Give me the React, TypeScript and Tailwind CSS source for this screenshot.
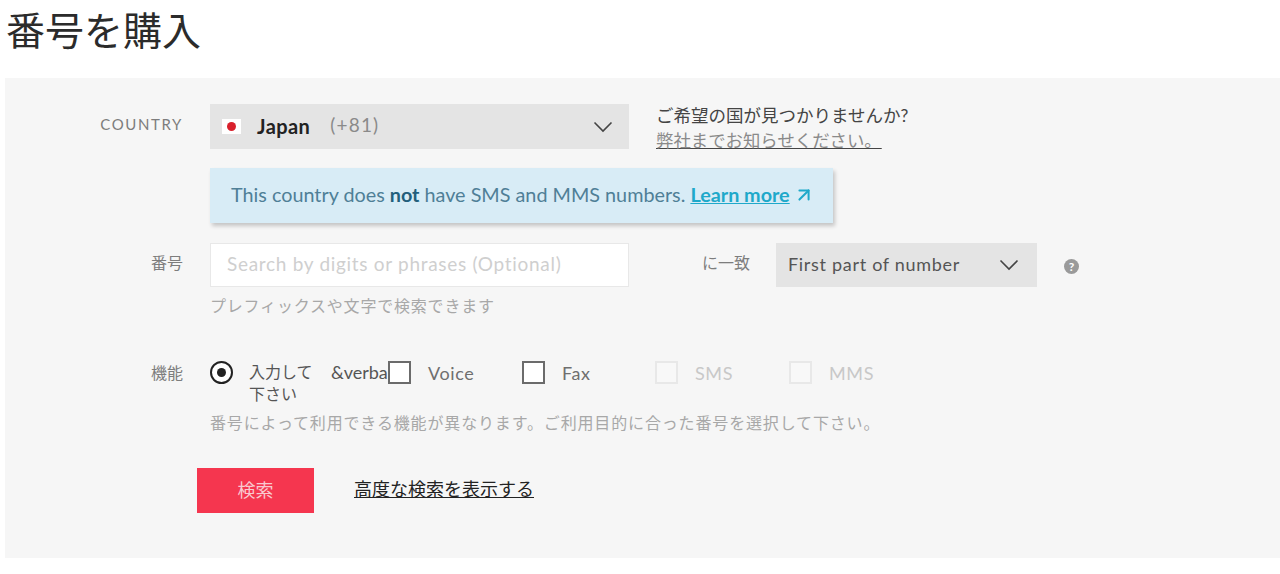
import React from "react";
import { ArrowUpRight } from "lucide-react";

const font = "font-['Lato','Noto_Sans_CJK_JP',sans-serif]";

function Chevron({ className }: { className: string }) {
  return (
    <svg className={className} width="20" height="12" viewBox="0 0 20 12" fill="none" stroke="#444" strokeWidth="1.6">
      <path d="M1.5 1.5L10 10L18.5 1.5" />
    </svg>
  );
}

function Check({ label, disabled, className }: { label: string; disabled?: boolean; className: string }) {
  return (
    <div className={`flex items-center ${className}`}>
      <span
        className={`w-[23px] h-[23px] shrink-0 border-2 ${
          disabled ? "border-[#e8e8e8] bg-[#f8f8f8]" : "border-[#6b6b6b] bg-white"
        }`}
      />
      <span className={`ml-[17px] mt-[2px] text-[18px] tracking-[0.6px] ${disabled ? "text-[#c8c8c8]" : "text-[#6f6f6f]"}`}>
        {label}
      </span>
    </div>
  );
}

export default function App() {
  return (
    <div className={`${font} w-[1280px] h-[574px] bg-white overflow-hidden`}>
      {/* Title */}
      <h1 className="h-[78px] pl-[6px] pt-[6px] text-[39px] leading-[48px] font-normal text-[#2b2b2b]">番号を購入</h1>

      {/* Panel */}
      <div className="ml-[5px] h-[480px] bg-[#f6f6f6] pt-[26px]">
        {/* Country */}
        <div className="flex h-[45px]">
          <div className="w-[178px] h-[41px] flex items-center justify-end text-[15px] tracking-[1.6px] text-[#7d7d7d]">
            COUNTRY
          </div>
          <div className="ml-[27px] w-[419px] h-[45px] bg-[#e4e4e4] flex items-center pl-[12px] pr-[16px]">
            <span className="w-[19px] h-[15px] bg-white flex items-center justify-center">
              <span className="w-[9px] h-[9px] rounded-full bg-[#d9202c]" />
            </span>
            <span className="ml-[16px] -mt-[2px] text-[20px] tracking-[0.4px] font-bold text-[#222]">Japan</span>
            <span className="ml-[20px] -mt-[2px] text-[19px] tracking-[1.2px] text-[#8a8a8a]">(+81)</span>
            <Chevron className="ml-auto" />
          </div>
          <div className="ml-[27px] -mt-[1px]">
            <p className="text-[17.5px] leading-[25px] whitespace-nowrap text-[#444]">ご希望の国が見つかりませんか?</p>
            <a className="block text-[17.4px] leading-[25px] whitespace-nowrap text-[#8a8a8a] underline decoration-[#444]">
              弊社までお知らせください。
            </a>
          </div>
        </div>

        {/* Alert */}
        <div className="mt-[19px] ml-[205px] w-[623px] h-[55px] bg-[#d8ecf6] shadow-[2px_3px_4px_rgba(0,0,0,0.2)] flex items-center pl-[21px] pb-[2px] text-[19.8px] text-[#4f7f97]">
          <span>
            This country does <b className="text-[#235f7c]">not</b> have SMS and MMS numbers.{" "}
            <a className="font-bold text-[#1fa9ca] underline">Learn more</a>
          </span>
          <ArrowUpRight className="ml-[3px] text-[#1fa9ca]" size={22} strokeWidth={2.2} />
        </div>

        {/* Number */}
        <div className="flex mt-[20px]">
          <div className="w-[178px] h-[40px] flex items-center justify-end text-[16px] text-[#7d7d7d]">番号</div>
          <div className="ml-[27px] w-[419px] h-[44px] bg-white border border-[#e8e8e8] flex items-center pl-[16px] pb-[2px] text-[19px] tracking-[0.7px] text-[#cfcfcf]">
            Search by digits or phrases (Optional)
          </div>
          <div className="ml-[73px] w-[48px] h-[40px] flex items-center justify-end text-[16px] whitespace-nowrap text-[#7d7d7d]">
            に一致
          </div>
          <div className="ml-[26px] w-[261px] h-[44px] bg-[#e4e4e4] flex items-center pl-[12px] pr-[18px] text-[18px] tracking-[0.7px] text-[#555]">
            <span className="-mt-[2px]">First part of number</span>
            <Chevron className="ml-auto" />
          </div>
          <div className="ml-[27px] h-[44px] flex items-center pt-[3px]">
            <span className="w-[15px] h-[15px] rounded-full bg-[#9a9a9a] text-white text-[12px] leading-[15px] font-bold text-center">
              ?
            </span>
          </div>
        </div>
        <p className="ml-[205px] mt-[8px] text-[16px] leading-[22px] tracking-[0.8px] text-[#a8a8a8]">
          プレフィックスや文字で検索できます
        </p>

        {/* Capabilities */}
        <div className="flex mt-[44px] h-[49px]">
          <div className="w-[178px] h-[23px] flex items-center justify-end text-[16px] text-[#7d7d7d]">機能</div>
          <div className="ml-[27px] w-[23px] h-[23px] rounded-full border-2 border-[#222] bg-white flex items-center justify-center shrink-0">
            <span className="w-[9px] h-[9px] rounded-full bg-[#222]" />
          </div>
          <div className="ml-[16px] w-[66px] text-[16px] leading-[22px] text-[#555]">入力して下さい</div>
          <div className="ml-[16px] w-[57px] h-[23px] text-[18px] leading-[23px] whitespace-nowrap text-[#555]">&amp;verba</div>
          <Check label="Voice" className="w-[134px] h-[23px]" />
          <Check label="Fax" className="w-[133px] h-[23px]" />
          <Check label="SMS" disabled className="w-[134px] h-[23px]" />
          <Check label="MMS" disabled className="w-[134px] h-[23px]" />
        </div>
        <p className="ml-[205px] mt-[2px] text-[16px] leading-[22px] tracking-[0.85px] text-[#a8a8a8]">
          番号によって利用できる機能が異なります。ご利用目的に合った番号を選択して下さい。
        </p>

        {/* Actions */}
        <div className="flex items-center mt-[34px] ml-[192px]">
          <button className="w-[117px] h-[45px] bg-[#f5364f] text-[#f9c9cf] text-[18px]">検索</button>
          <a className="ml-[40px] -mt-[3px] text-[18px] text-[#222] underline">高度な検索を表示する</a>
        </div>
      </div>
    </div>
  );
}
